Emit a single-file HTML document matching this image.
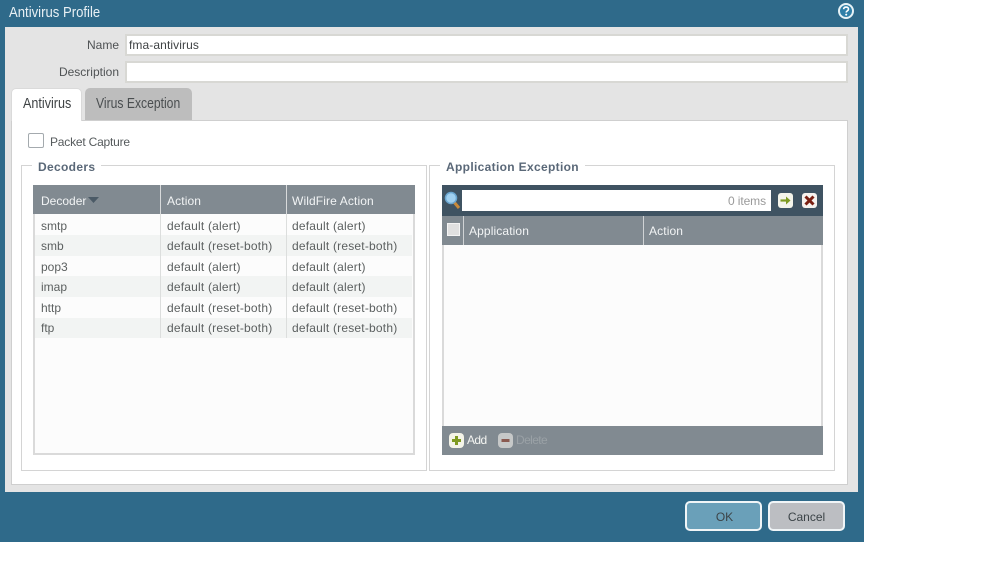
<!DOCTYPE html>
<html><head><meta charset="utf-8"><style>
html,body{margin:0;padding:0;background:#fff;width:999px;height:562px;overflow:hidden}
*{box-sizing:border-box}
body{font-family:"Liberation Sans",sans-serif;font-size:12px;color:#5c6060;position:relative}
#w{position:absolute;left:0;top:0;width:999px;height:562px;filter:blur(.3px)}
.a{position:absolute}
.t{position:absolute;white-space:nowrap;line-height:14px}
.c{letter-spacing:.2px}
.n{position:absolute;white-space:nowrap;font-size:15px;line-height:17px;transform-origin:0 50%}
.h{color:#f2f4f5;font-size:12px;letter-spacing:.12px}
.input{position:absolute;background:#fff;border:2px solid #d8d8d4}
.fs{position:absolute;border:1px solid #d4d4d4;background:#fff}
.leg{position:absolute;background:#fff;font-weight:bold;color:#5a6878;font-size:12px;line-height:14px;padding:0 6px;white-space:nowrap;letter-spacing:.33px}
.row{position:absolute;left:35px;width:377px}
.btn{position:absolute;border:2px solid #f0f5f7;border-radius:5px;top:501px;height:30px;width:77px;text-align:center;line-height:29px;color:#3c4448;font-size:12px}
.tb{position:absolute;background:#fcfcfc;border:2px solid #dadada}
</style></head><body><div id="w">
<div class="a" style="left:0;top:0;width:864px;height:542px;background:#2f6a8a"></div>
<div class="n" style="left:9px;top:4px;color:#e8f0f4;transform:scaleX(.875)">Antivirus Profile</div>
<svg class="a" style="left:837px;top:2px" width="18" height="18" viewBox="0 0 18 18"><circle cx="9" cy="9" r="7" fill="#2f7fa8" stroke="#e6f2f6" stroke-width="2"/><path d="M6.600 7.200C6.800 5.600 8 5.100 9.100 5.100c1.400 0 2.400.8 2.400 2 0 1.700-2.300 1.800-2.300 3.400" fill="none" stroke="#fff" stroke-width="1.600"/><circle cx="9.200" cy="12.600" r="1" fill="#fff"/></svg>

<div class="a" style="left:5px;top:27px;width:853px;height:465px;background:#e4e4e4"></div>
<div class="t" style="left:60px;top:38px;width:59px;text-align:right;color:#4f5254">Name</div>
<div class="input" style="left:125px;top:34px;width:723px;height:22px"></div>
<div class="t" style="left:129px;top:38px;color:#3f4244;letter-spacing:.1px">fma-antivirus</div>
<div class="t" style="left:40px;top:65px;width:79px;text-align:right;color:#4f5254">Description</div>
<div class="input" style="left:125px;top:61px;width:723px;height:22px"></div>

<div class="a" style="left:11px;top:120px;width:837px;height:365px;background:#fff;border:1px solid #cfcfcf"></div>
<div class="a" style="left:11px;top:88px;width:71px;height:33px;background:#fff;border:1px solid #dadada;border-bottom:0;border-radius:5px 5px 0 0"></div>
<div class="a" style="left:85px;top:88px;width:107px;height:32px;background:#bdbdbd;border-radius:5px 5px 0 0"></div>
<div class="n" style="left:23px;top:95px;color:#3e4244;transform:scaleX(.84)">Antivirus</div>
<div class="n" style="left:96px;top:95px;color:#4a4e50;transform:scaleX(.81)">Virus Exception</div>

<div class="a" style="left:28px;top:133px;width:16px;height:15px;border:1.500px solid #a4aaae;border-radius:2px;background:#fff"></div>
<div class="t" style="left:50px;top:135px;color:#555a5c;letter-spacing:-.2px">Packet Capture</div>

<div class="fs" style="left:21px;top:165px;width:406px;height:306px"></div>
<div class="leg" style="left:32px;top:160px">Decoders</div>
<div class="tb" style="left:33px;top:185px;width:382px;height:270px"></div>
<div class="a" style="left:33px;top:185px;width:382px;height:29px;background:#818a91"></div>
<div class="a" style="left:160px;top:185px;width:1px;height:153px;background:#d8dadb"></div>
<div class="a" style="left:286px;top:185px;width:1px;height:153px;background:#d8dadb"></div>
<div class="t h" style="left:41px;top:194px;letter-spacing:0">Decoder</div>
<svg class="a" style="left:88px;top:197px" width="12" height="7"><path d="M0 0H11L5.500 6Z" fill="#4b5a66"/></svg>
<div class="t h" style="left:167px;top:194px">Action</div>
<div class="t h" style="left:292px;top:194px">WildFire Action</div>

<div class="row" style="top:235px;height:21px;background:#f2f4f3"></div>
<div class="row" style="top:276px;height:21px;background:#f2f4f3"></div>
<div class="row" style="top:318px;height:20px;background:#f2f4f3"></div>
<div class="a" style="left:160px;top:214px;width:1px;height:124px;background:#dcdedd"></div>
<div class="a" style="left:286px;top:214px;width:1px;height:124px;background:#dcdedd"></div>

<div class="t" style="left:41px;top:219px">smtp</div><div class="t c" style="left:167px;top:219px">default (alert)</div><div class="t c" style="left:292px;top:219px">default (alert)</div>
<div class="t" style="left:41px;top:239px">smb</div><div class="t c" style="left:167px;top:239px">default (reset-both)</div><div class="t c" style="left:292px;top:239px">default (reset-both)</div>
<div class="t" style="left:41px;top:260px">pop3</div><div class="t c" style="left:167px;top:260px">default (alert)</div><div class="t c" style="left:292px;top:260px">default (alert)</div>
<div class="t" style="left:41px;top:280px">imap</div><div class="t c" style="left:167px;top:280px">default (alert)</div><div class="t c" style="left:292px;top:280px">default (alert)</div>
<div class="t" style="left:41px;top:301px">http</div><div class="t c" style="left:167px;top:301px">default (reset-both)</div><div class="t c" style="left:292px;top:301px">default (reset-both)</div>
<div class="t" style="left:41px;top:321px">ftp</div><div class="t c" style="left:167px;top:321px">default (reset-both)</div><div class="t c" style="left:292px;top:321px">default (reset-both)</div>

<div class="fs" style="left:429px;top:165px;width:406px;height:306px"></div>
<div class="leg" style="left:440px;top:160px">Application Exception</div>
<div class="tb" style="left:442px;top:185px;width:381px;height:270px"></div>
<div class="a" style="left:442px;top:185px;width:381px;height:31px;background:#3f5362"></div>
<svg class="a" style="left:444px;top:191px" width="18" height="19" viewBox="0 0 18 19"><path d="M10 11l5 6" stroke="#c98a3a" stroke-width="3"/><circle cx="7" cy="7" r="5.500" fill="#9fd0f0" stroke="#6aa6d0" stroke-width="1.500"/></svg>
<div class="a" style="left:462px;top:190px;width:309px;height:21px;background:#fff"></div>
<div class="t" style="left:728px;top:194px;color:#9a9a9a;letter-spacing:-.1px">0 items</div>
<svg class="a" style="left:778px;top:193px" width="15" height="15" viewBox="0 0 15 15"><rect width="15" height="15" rx="3" fill="#f4f4ea"/><path d="M2.500 7.500H10" stroke="#7f9a22" stroke-width="2.200"/><path d="M8 3.500L12.500 7.500L8 11.500Z" fill="#7f9a22"/></svg>
<svg class="a" style="left:802px;top:193px" width="15" height="15" viewBox="0 0 15 15"><rect width="15" height="15" rx="3" fill="#f6f2ee"/><path d="M3.500 3.500L11.500 11.500M11.500 3.500L3.500 11.500" stroke="#7a1f12" stroke-width="3"/></svg>
<div class="a" style="left:442px;top:216px;width:381px;height:29px;background:#818a91"></div>
<div class="a" style="left:463px;top:216px;width:1px;height:29px;background:#d0d3d5"></div>
<div class="a" style="left:643px;top:216px;width:1px;height:29px;background:#d0d3d5"></div>
<div class="a" style="left:447px;top:223px;width:13px;height:13px;background:#e0e0e0;border:1px solid #f4f4f4"></div>
<div class="t h" style="left:469px;top:224px">Application</div>
<div class="t h" style="left:649px;top:224px">Action</div>
<div class="a" style="left:442px;top:426px;width:381px;height:29px;background:#818a91"></div>
<svg class="a" style="left:449px;top:433px" width="15" height="15" viewBox="0 0 15 15"><rect width="15" height="15" rx="4" fill="#f4f4e8"/><path d="M7.500 3V12M3 7.500H12" stroke="#7f9a22" stroke-width="3"/></svg>
<div class="t" style="left:467px;top:433px;color:#f4f5f2;letter-spacing:-.6px">Add</div>
<svg class="a" style="left:498px;top:433px" width="15" height="15" viewBox="0 0 15 15"><rect width="15" height="15" rx="4" fill="#c6c8c8"/><path d="M3.500 7.500H11.500" stroke="#8a5a50" stroke-width="3"/></svg>
<div class="t" style="left:516px;top:433px;color:#9aa1a6;letter-spacing:-.6px">Delete</div>

<div class="btn" style="left:685px;background:#6aa0b9;padding-left:2px">OK</div>
<div class="btn" style="left:768px;background:#bcbec2">Cancel</div>
</div></body></html>
